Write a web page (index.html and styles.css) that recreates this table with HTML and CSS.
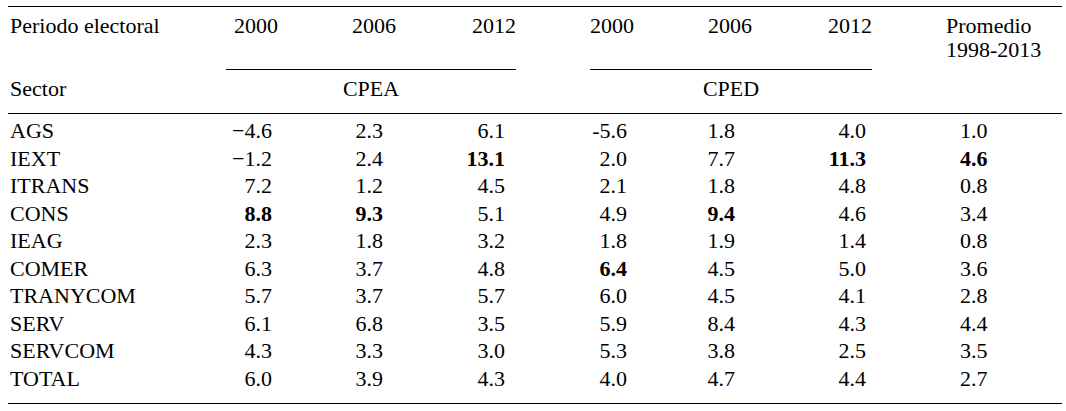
FILE: index.html
```html
<!DOCTYPE html>
<html lang="es">
<head>
<meta charset="utf-8">
<title>Tabla</title>
<link rel="stylesheet" href="styles.css">
</head>
<body>
<table class="tbl">
  <colgroup>
    <col class="c-a"><col class="c-b"><col class="c-c"><col class="c-d"><col class="c-s"><col class="c-e"><col class="c-f"><col class="c-g"><col class="c-h">
  </colgroup>
  <thead>
    <tr class="h1">
      <th class="lab">Periodo electoral</th>
      <th class="b sp">2000</th>
      <th class="c sp">2006</th>
      <th class="d sp">2012</th>
      <th class="s"></th>
      <th class="e sp">2000</th>
      <th class="f sp">2006</th>
      <th class="g sp">2012</th>
      <th class="h">Promedio<br>1998-2013</th>
    </tr>
    <tr class="h2">
      <th class="lab">Sector</th>
      <th class="grp" colspan="3">CPEA</th>
      <th class="s"></th>
      <th class="grp" colspan="3">CPED</th>
      <th class="h"></th>
    </tr>
  </thead>
  <tbody>
    <tr><td class="lab">AGS</td><td class="b">&minus;4.6</td><td class="c">2.3</td><td class="d">6.1</td><td class="s"></td><td class="e">-5.6</td><td class="f">1.8</td><td class="g">4.0</td><td class="h">1.0</td></tr>
    <tr><td class="lab">IEXT</td><td class="b">&minus;1.2</td><td class="c">2.4</td><td class="d"><b>13.1</b></td><td class="s"></td><td class="e">2.0</td><td class="f">7.7</td><td class="g"><b>11.3</b></td><td class="h"><b>4.6</b></td></tr>
    <tr><td class="lab">ITRANS</td><td class="b">7.2</td><td class="c">1.2</td><td class="d">4.5</td><td class="s"></td><td class="e">2.1</td><td class="f">1.8</td><td class="g">4.8</td><td class="h">0.8</td></tr>
    <tr><td class="lab">CONS</td><td class="b"><b>8.8</b></td><td class="c"><b>9.3</b></td><td class="d">5.1</td><td class="s"></td><td class="e">4.9</td><td class="f"><b>9.4</b></td><td class="g">4.6</td><td class="h">3.4</td></tr>
    <tr><td class="lab">IEAG</td><td class="b">2.3</td><td class="c">1.8</td><td class="d">3.2</td><td class="s"></td><td class="e">1.8</td><td class="f">1.9</td><td class="g">1.4</td><td class="h">0.8</td></tr>
    <tr><td class="lab">COMER</td><td class="b">6.3</td><td class="c">3.7</td><td class="d">4.8</td><td class="s"></td><td class="e"><b>6.4</b></td><td class="f">4.5</td><td class="g">5.0</td><td class="h">3.6</td></tr>
    <tr><td class="lab">TRANYCOM</td><td class="b">5.7</td><td class="c">3.7</td><td class="d">5.7</td><td class="s"></td><td class="e">6.0</td><td class="f">4.5</td><td class="g">4.1</td><td class="h">2.8</td></tr>
    <tr><td class="lab">SERV</td><td class="b">6.1</td><td class="c">6.8</td><td class="d">3.5</td><td class="s"></td><td class="e">5.9</td><td class="f">8.4</td><td class="g">4.3</td><td class="h">4.4</td></tr>
    <tr><td class="lab">SERVCOM</td><td class="b">4.3</td><td class="c">3.3</td><td class="d">3.0</td><td class="s"></td><td class="e">5.3</td><td class="f">3.8</td><td class="g">2.5</td><td class="h">3.5</td></tr>
    <tr class="last"><td class="lab">TOTAL</td><td class="b">6.0</td><td class="c">3.9</td><td class="d">4.3</td><td class="s"></td><td class="e">4.0</td><td class="f">4.7</td><td class="g">4.4</td><td class="h">2.7</td></tr>
  </tbody>
</table>
</body>
</html>
```

FILE: styles.css
```css
html, body {
  background: #fff;
}
body {
  margin: 6px 4px 0 8px;
  font-family: "Liberation Serif", "Times New Roman", serif;
  font-size: 22px;
  color: #000;
}
.tbl {
  width: 1054px;
  border-collapse: collapse;
  table-layout: fixed;
  border-top: 1px solid #000;
  border-bottom: 1px solid #000;
}
.c-a { width: 218px; }
.c-b { width: 97px; }
.c-c { width: 97px; }
.c-d { width: 96px; }
.c-s { width: 74px; }
.c-e { width: 94px; }
.c-f { width: 94px; }
.c-g { width: 94px; }
.c-h { width: 190px; }

th, td {
  padding: 0;
  font-weight: normal;
  white-space: nowrap;
  vertical-align: top;
}
b { font-weight: bold; }

.lab { text-align: left; padding-left: 2px; }

/* header row 1 */
.h1 th {
  line-height: 24px;
  padding-top: 7px;
  padding-bottom: 7px;
  border-bottom: 1px solid transparent;
  height: 48px;
}
.h1 th.sp { border-bottom: 1px solid #000; }
.h1 .b { text-align: right; padding-right: 45px; }
.h1 .c { text-align: right; padding-right: 24px; }
.h1 .d { text-align: right; padding-right: 0; }
.h1 .e { text-align: right; padding-right: 50px; }
.h1 .f { text-align: right; padding-right: 26px; }
.h1 .g { text-align: right; padding-right: 0; }
.h1 .h { text-align: left; padding-left: 74px; }

/* header row 2 */
.h2 th {
  line-height: 24px;
  padding-top: 7px;
  padding-bottom: 12px;
  border-bottom: 1px solid #000;
}
.h2 .grp { text-align: center; }

/* body */
tbody td { line-height: 27.5px; }
tbody tr:first-child td { padding-top: 3px; }
tbody tr.last td { padding-bottom: 11px; }
tbody .b { text-align: right; padding-right: 51px; }
tbody .c { text-align: right; padding-right: 37px; }
tbody .d { text-align: right; padding-right: 11px; }
tbody .e { text-align: right; padding-right: 57px; }
tbody .f { text-align: right; padding-right: 43px; }
tbody .g { text-align: right; padding-right: 6px; }
tbody .h { text-align: left; padding-left: 88px; }
```
